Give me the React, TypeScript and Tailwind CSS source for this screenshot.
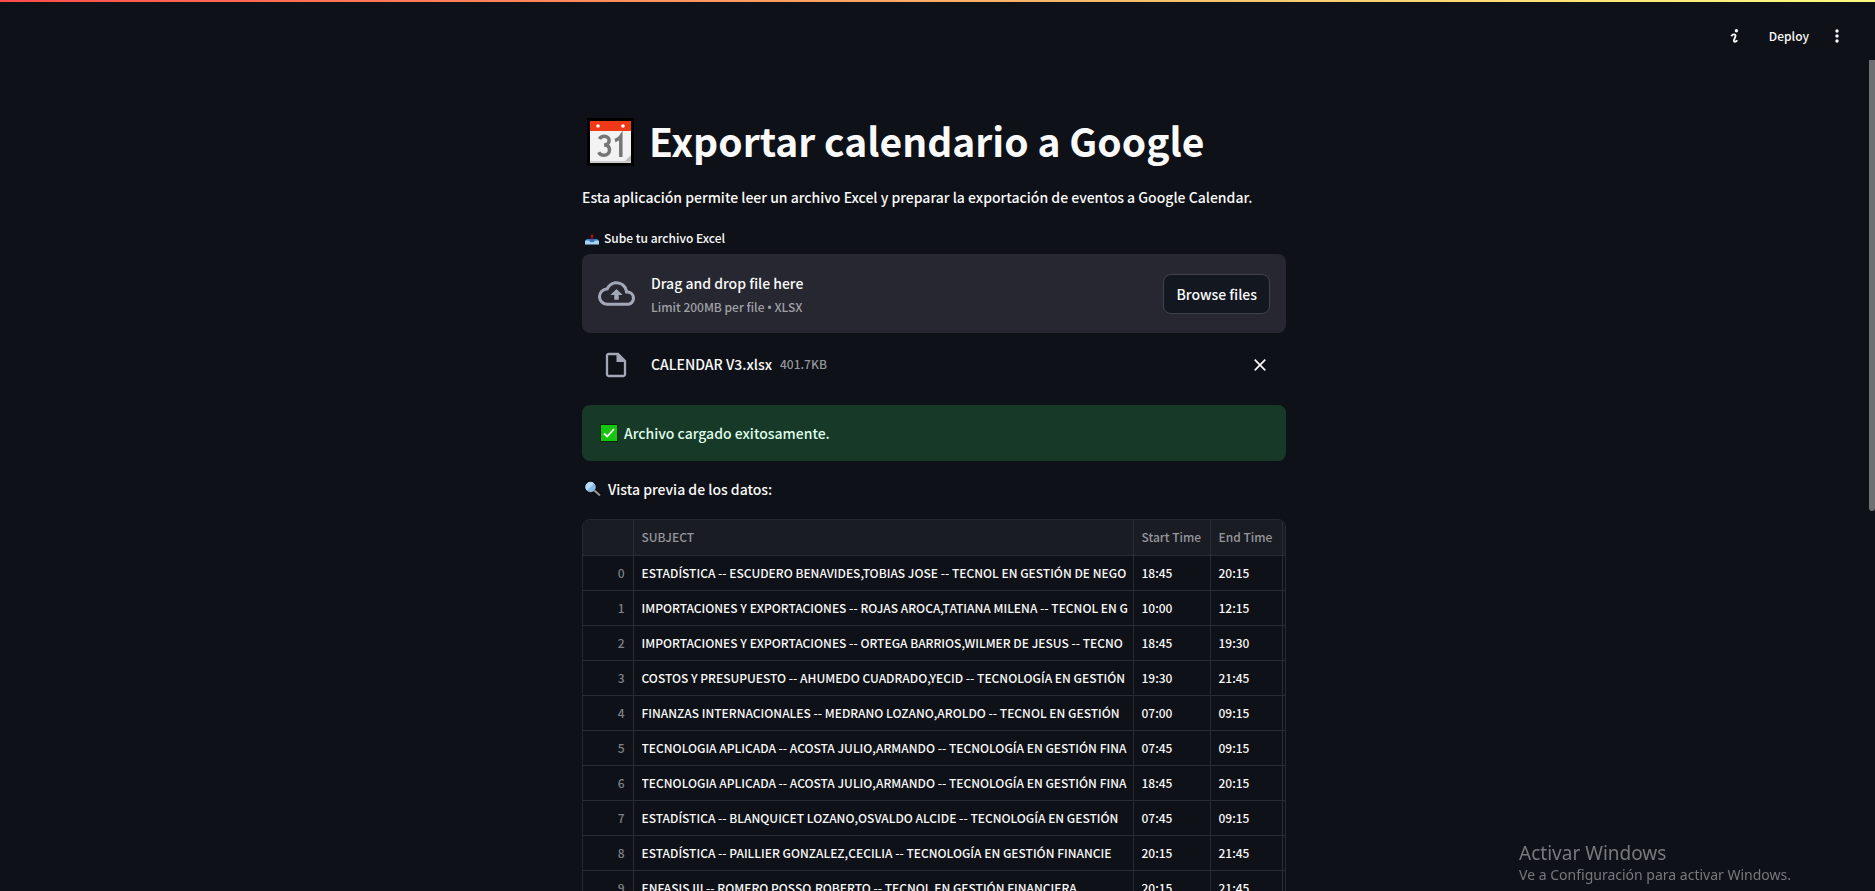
import React from "react";

const rows: [string, string, string][] = [
  ["ESTADÍSTICA -- ESCUDERO BENAVIDES,TOBIAS JOSE -- TECNOL EN GESTIÓN DE NEGO", "18:45", "20:15"],
  ["IMPORTACIONES Y EXPORTACIONES -- ROJAS AROCA,TATIANA MILENA -- TECNOL EN G", "10:00", "12:15"],
  ["IMPORTACIONES Y EXPORTACIONES -- ORTEGA BARRIOS,WILMER DE JESUS -- TECNO", "18:45", "19:30"],
  ["COSTOS Y PRESUPUESTO -- AHUMEDO CUADRADO,YECID -- TECNOLOGÍA EN GESTIÓN", "19:30", "21:45"],
  ["FINANZAS INTERNACIONALES -- MEDRANO LOZANO,AROLDO -- TECNOL EN GESTIÓN", "07:00", "09:15"],
  ["TECNOLOGIA APLICADA -- ACOSTA JULIO,ARMANDO -- TECNOLOGÍA EN GESTIÓN FINA", "07:45", "09:15"],
  ["TECNOLOGIA APLICADA -- ACOSTA JULIO,ARMANDO -- TECNOLOGÍA EN GESTIÓN FINA", "18:45", "20:15"],
  ["ESTADÍSTICA -- BLANQUICET LOZANO,OSVALDO ALCIDE -- TECNOLOGÍA EN GESTIÓN", "07:45", "09:15"],
  ["ESTADÍSTICA -- PAILLIER GONZALEZ,CECILIA -- TECNOLOGÍA EN GESTIÓN FINANCIE", "20:15", "21:45"],
  ["ENFASIS III -- ROMERO POSSO,ROBERTO -- TECNOL EN GESTIÓN FINANCIERA", "20:15", "21:45"],
];

function CalendarIcon() {
  return (
    <svg className="h-12 w-12 shrink-0" viewBox="0 0 48 48" aria-hidden="true">
      <rect x="0" y="0" width="47" height="48" fill="#000" />
      <rect x="3" y="3" width="41" height="42" fill="#f2f2f2" />
      <rect x="3" y="3" width="41" height="10" fill="#f03a17" />
      <circle cx="11" cy="8" r="1.8" fill="#fff" />
      <circle cx="36" cy="8" r="1.8" fill="#fff" />
      <path d="M3 43h41v2H3z" fill="#ccc" />
      <path d="M38 43l6-6v6z" fill="#bbb" />
      <path
        d="M12.500 21c1-2 2.800-2.800 4.800-2.800 3 0 4.800 1.800 4.800 4.300 0 2.800-2 4.500-5 4.500 3.400 0 5.400 1.900 5.400 5 0 3.200-2.300 5.200-5.500 5.200-2.400 0-4.300-.9-5.300-3M28 22.500c2.400-.7 4.500-2 5.800-4v20.500"
        fill="none"
        stroke="#767676"
        strokeWidth="3.500"
      />
    </svg>
  );
}

function OutboxIcon() {
  return (
    <svg className="h-4 w-4 shrink-0" viewBox="0 0 16 16" aria-hidden="true">
      <path d="M2.500 8.500h11l1.500 2.500v3.500H1V11z" fill="#1d5d9b" stroke="#000" strokeWidth=".6" />
      <path d="M3 9h10l1 2H2z" fill="#2f7fc8" />
      <path d="M1 10.500h4l1.500 1.500h3l1.500-1.500h4v4H1z" fill="#a9d3f5" />
      <path d="M6.500 10.500h3l-1.500 2.500z" fill="#2f8be0" />
      <path d="M7.400 10.500V6.500H6L8 4l2 2.500H8.600v4z" fill="#c50f1f" />
    </svg>
  );
}

function CheckIcon() {
  return (
    <svg className="h-[18px] w-[18px] shrink-0" viewBox="0 0 18 18" aria-hidden="true">
      <rect width="18" height="18" fill="#062b06" />
      <rect x="1" y="1" width="16" height="16" fill="#16c60c" />
      <path d="M4 9.500l3.200 3L14 5" fill="none" stroke="#fff" strokeWidth="1.800" />
    </svg>
  );
}

function MagnifierIcon() {
  return (
    <svg className="h-[18px] w-[18px] shrink-0" viewBox="0 0 18 18" aria-hidden="true">
      <path d="M10 10l6 5.500" stroke="#000" strokeWidth="4" />
      <circle cx="6.500" cy="7" r="6" fill="#000" />
      <path d="M10.300 10.300l5.700 5.200" stroke="#8b8f94" strokeWidth="2.300" />
      <circle cx="6.500" cy="7" r="4.900" fill="#83beec" stroke="#9fb4c6" strokeWidth=".8" />
      <path d="M3 10.500a4.900 4.900 0 0 1 7-7z" fill="#b5dcf8" />
    </svg>
  );
}

export default function App() {
  return (
    <div className="flex h-screen flex-col overflow-hidden bg-[#0e1117] font-['Noto_Sans_CJK_SC','Noto_Sans',sans-serif] text-[14px] font-medium leading-6 text-[#fafafa]">
      <div className="h-0.5 shrink-0 bg-linear-to-r from-[#ff4b4b] to-[#fffd80]" />
      <header className="flex h-[58px] shrink-0 items-center justify-end pr-[26px] pt-[10px]">
        <button aria-label="Información" className="mr-6 grid h-7 w-5 place-items-center">
          <svg className="h-4 w-3" viewBox="0 0 12 16" aria-hidden="true">
            <circle cx="7.400" cy="2.800" r="1.700" fill="#fafafa" />
            <path d="M2.300 8.200c.8-1.300 1.700-1.800 2.700-1.800 1.200 0 1.800.8 1.400 2L5.200 11.500c-.5 1.500-.2 2.200.7 2.200.8 0 1.600-.5 2.300-1.500" fill="none" stroke="#fafafa" strokeWidth="1.900" />
          </svg>
        </button>
        <button className="text-[12px]">Deploy</button>
        <button aria-label="Menú" className="ml-4 grid h-7 w-6 place-items-center">
          <svg className="h-4 w-1" viewBox="0 0 4 16" fill="#fafafa" aria-hidden="true">
            <circle cx="2" cy="3" r="1.700" />
            <circle cx="2" cy="8" r="1.700" />
            <circle cx="2" cy="13" r="1.700" />
          </svg>
        </button>
      </header>

      <div className="flex min-h-0 flex-1">
        <main className="min-w-0 flex-1 overflow-hidden">
          <div className="mx-auto max-w-[736px] px-4 pt-[54px]">
            <h1 className="flex h-14 items-center gap-3.5 pl-[5px] text-[39px] font-bold leading-[52px]">
              <CalendarIcon />
              <span className="pb-1">Exportar calendario a Google</span>
            </h1>
            <p className="mt-[15px]">
              Esta aplicación permite leer un archivo Excel y preparar la exportación de eventos a Google Calendar.
            </p>

            <section className="mt-[17px]">
              <div className="flex h-6 items-center gap-1 pl-0.5 text-[12px]">
                <OutboxIcon />
                <label htmlFor="upload">Sube tu archivo Excel</label>
              </div>
              <div className="mt-1 flex h-[79px] items-center rounded-lg bg-[#262730] px-4">
                <svg className="h-[37px] w-[37px] shrink-0" viewBox="0 0 24 24" fill="#a3a8b8" aria-hidden="true">
                  <path d="M19.350 10.040A7.490 7.490 0 0 0 12 4C9.110 4 6.600 5.640 5.350 8.040A5.994 5.994 0 0 0 0 14c0 3.310 2.690 6 6 6h13c2.760 0 5-2.240 5-5 0-2.640-2.050-4.780-4.650-4.960zM19 18H6c-2.210 0-4-1.790-4-4 0-2.050 1.530-3.760 3.560-3.970l1.070-.11.5-.95A5.469 5.469 0 0 1 12 6c2.620 0 4.880 1.860 5.390 4.430l.3 1.500 1.530.11A2.980 2.980 0 0 1 22 15c0 1.650-1.350 3-3 3zM8 13h2.550v3h2.900v-3H16l-4-4z" />
                </svg>
                <div className="ml-4 flex-1 pt-1">
                  <div>Drag and drop file here</div>
                  <div className="text-[12px] text-[#a0a1a5]">
                    Limit 200MB per file <span className="font-['Noto_Sans',sans-serif]">•</span> XLSX
                  </div>
                </div>
                <button id="upload" className="h-10 rounded-lg border border-[#41434c] bg-[#13171f] px-3">
                  Browse files
                </button>
              </div>
              <div className="flex h-16 items-center pl-4 pr-3.5">
                <svg className="h-7 w-9 shrink-0" viewBox="0 0 36 28" aria-hidden="true">
                  <path d="M10.500 3h9.500l7 7v13.500a1.500 1.500 0 0 1-1.500 1.500h-15a1.500 1.500 0 0 1-1.500-1.500v-19a1.500 1.500 0 0 1 1.500-1.500z" fill="none" stroke="#a3a8b8" strokeWidth="2.300" />
                  <path d="M18.500 2.500v8.500h8.500z" fill="#a3a8b8" />
                </svg>
                <div className="ml-[17px] flex flex-1 items-center gap-2 pb-0.5">
                  <span>CALENDAR V3.xlsx</span>
                  <span className="text-[12px] text-[#95969b]">401.7KB</span>
                </div>
                <button aria-label="Quitar archivo" className="grid h-6 w-6 place-items-center">
                  <svg className="h-3 w-3" viewBox="0 0 12 12" aria-hidden="true">
                    <path d="M.7.7l10.600 10.600M11.300.7L.7 11.300" stroke="#fafafa" strokeWidth="1.700" />
                  </svg>
                </button>
              </div>
            </section>

            <div role="status" className="mt-2 flex h-14 items-center gap-1.5 rounded-lg bg-[#173928] px-[18px] text-[#dffde9]">
              <CheckIcon />
              <span>Archivo cargado exitosamente.</span>
            </div>
            <p className="mt-4 flex items-center gap-1.5 pl-0.5">
              <MagnifierIcon />
              <span>Vista previa de los datos:</span>
            </p>

            <div className="mt-[18px] overflow-hidden rounded-t-lg border border-[#262930]">
              <table className="w-full table-fixed border-collapse text-left text-[12px] leading-5">
                <colgroup>
                  <col className="w-[50px]" />
                  <col />
                  <col className="w-[77px]" />
                  <col className="w-[72px]" />
                  <col className="w-[3px]" />
                </colgroup>
                <thead>
                  <tr className="h-[35px] border-b border-[#2a2c33] bg-[#1a1c24] text-[#95969b]">
                    <th className="border-r border-[#2a2c33]" aria-label="Índice" />
                    <th className="border-r border-[#2a2c33] pl-2 font-medium">SUBJECT</th>
                    <th className="whitespace-nowrap border-r border-[#2a2c33] pl-2 font-medium">Start Time</th>
                    <th className="whitespace-nowrap border-r border-[#2a2c33] pl-2 font-medium">End Time</th>
                    <td />
                  </tr>
                </thead>
                <tbody>
                  {rows.map(([subject, start, end], i) => (
                    <tr key={i} className="h-[35px] border-b border-[#2a2c33]">
                      <td className="border-r border-[#2a2c33] pr-2 text-right text-[#808288]">{i}</td>
                      <td className="border-r border-[#2a2c33] pl-2">
                        <div className="overflow-hidden whitespace-nowrap">{subject}</div>
                      </td>
                      <td className="border-r border-[#2a2c33] pl-2">{start}</td>
                      <td className="border-r border-[#2a2c33] pl-2">{end}</td>
                      <td />
                    </tr>
                  ))}
                </tbody>
              </table>
            </div>
          </div>
        </main>
        <div className="w-[7px] shrink-0 pl-px">
          <div className="h-[451px] rounded-b-sm bg-[#6e6f73]" />
        </div>
      </div>

      <div className="pointer-events-none fixed bottom-1.5 right-[84px] font-['Noto_Sans','Open_Sans',sans-serif] font-normal text-[#77797d]">
        <div className="text-[19px] leading-6">Activar Windows</div>
        <div className="text-[14px] leading-5">Ve a Configuración para activar Windows.</div>
      </div>
    </div>
  );
}
